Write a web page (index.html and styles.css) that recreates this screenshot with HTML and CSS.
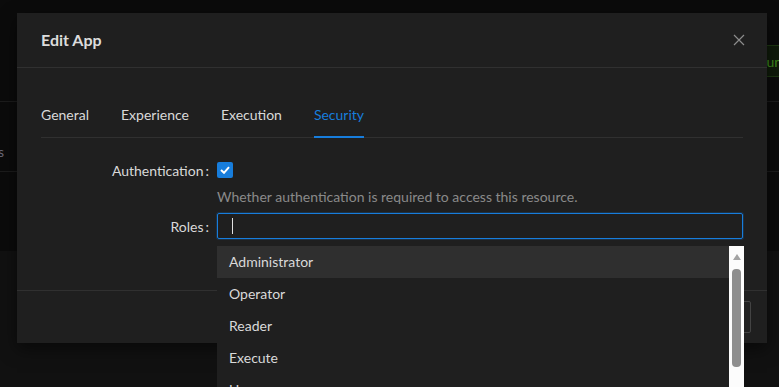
FILE: index.html
```html
<!DOCTYPE html>
<html>
	<head>
		<meta charset="utf-8">
		<link rel="stylesheet" href="styles.css">
	</head>
	<body>
		<div class="page">
			<div class="topbar"></div>
			<div class="toolbar">
				<button class="runButton">Run</button>
			</div>
			<div class="tableRow">
				<div class="cell"><span class="cellText">Apps</span></div>
			</div>
			<div class="panel"></div>
		</div>

		<div class="modal">
			<div class="modalHeader">
				<span class="modalTitle">Edit App</span>
				<svg class="closeIcon" width="12" height="12" viewBox="0 0 12 12">
					<path d="M1 1 L11 11 M11 1 L1 11" stroke="#8c8c8c" stroke-width="1.2" fill="none"/>
				</svg>
			</div>

			<div class="modalBody">
				<div class="tabs">
					<div class="tab">General</div>
					<div class="tab">Experience</div>
					<div class="tab">Execution</div>
					<div class="tab active">Security</div>
				</div>

				<div class="formRow checkRow">
					<label class="formLabel">Authentication</label>
					<div class="formControl">
						<span class="checkbox">
							<svg width="10" height="8" viewBox="0 0 10 8">
								<path d="M1 4 L4 6.8 L9 1.2" stroke="#fff" stroke-width="2" fill="none"/>
							</svg>
						</span>
					</div>
				</div>
				<div class="formHelp">Whether authentication is required to access this resource.</div>

				<div class="formRow inputRow">
					<label class="formLabel">Roles</label>
					<div class="formControl">
						<div class="selectBox"><span class="caret"></span></div>
					</div>
				</div>
			</div>

			<div class="modalFooter">
				<button class="footerButton">Cancel</button>
				<button class="footerButton">Save</button>
			</div>

			<div class="dropdown">
				<div class="optionList">
					<div class="option active">Administrator</div>
					<div class="option">Operator</div>
					<div class="option">Reader</div>
					<div class="option">Execute</div>
					<div class="option">User</div>
				</div>
				<div class="scrollbar">
					<div class="scrollArrow"></div>
					<div class="scrollThumb"></div>
				</div>
			</div>
		</div>
	</body>
</html>
```

FILE: styles.css
```css
html, body {
	height: 387px;
	overflow: hidden;
}

body {
	margin: 0;
	background-color: #0b0b0b;
	font-family: Lato, "Noto Sans", sans-serif;
	font-size: 14px;
	color: #dbdbdb;
	position: relative;
}

/* page behind the dialog */

.page {
	display: flex;
	flex-direction: column;
}
.topbar {
	height: 45px;
}
.toolbar {
	height: 56px;
	display: flex;
	justify-content: flex-end;
	align-items: flex-start;
}
.runButton {
	height: 32px;
	width: 40px;
	padding: 0 0 0 7px;
	margin-right: -11px;
	background-color: #0f1a0a;
	border: 1px solid #1e3812;
	border-radius: 2px;
	color: #3f8a1c;
	font-family: inherit;
	font-size: 14px;
	text-align: left;
}
.tableRow {
	height: 69px;
	border-top: 1px solid #1c1c1c;
	border-bottom: 1px solid #1c1c1c;
	display: flex;
	align-items: flex-end;
}
.cell {
	width: 4px;
	display: flex;
	justify-content: flex-end;
	white-space: nowrap;
	padding-bottom: 11px;
}
.cellText {
	color: #6a6878;
}
.panel {
	margin-top: 79px;
	height: 140px;
	background-color: #111111;
}

/* dialog */

.modal {
	position: absolute;
	left: 17px;
	top: 13px;
	width: 750px;
	background-color: #1f1f1f;
	box-shadow: 0 6px 16px rgba(0, 0, 0, 0.5);
}
.modalHeader {
	display: flex;
	justify-content: space-between;
	align-items: center;
	padding: 16px 22px 16px 24px;
	border-bottom: 1px solid #303030;
	line-height: 22px;
}
.modalTitle {
	font-size: 16px;
	font-weight: bold;
	color: #dcdcdc;
}

.modalBody {
	padding: 24px 24px 51px 24px;
}

.tabs {
	display: flex;
	gap: 32px;
	border-bottom: 1px solid #303030;
	margin-bottom: 20px;
}
.tab {
	position: relative;
	padding: 12px 0 11px 0;
	line-height: 22px;
	font-size: 14px;
	color: #d9d9d9;
}
.tab.active {
	color: #177ddc;
}
.tab.active::after {
	content: "";
	position: absolute;
	left: 0;
	right: 0;
	bottom: -1px;
	height: 2px;
	background-color: #177ddc;
}

.formRow {
	display: flex;
	align-items: center;
}
.checkRow {
	height: 24px;
}
.inputRow {
	height: 26px;
	margin-top: 5px;
}
.formLabel {
	width: 176px;
	display: flex;
	justify-content: flex-end;
	color: #d9d9d9;
}
.formLabel::after {
	content: ":";
	margin: 0 8px 0 2px;
}
.formControl {
	flex: 1;
}

.checkbox {
	display: flex;
	align-items: center;
	justify-content: center;
	width: 16px;
	height: 16px;
	border-radius: 2px;
	background-color: #177ddc;
}

.formHelp {
	margin: 4px 0 0 176px;
	line-height: 22px;
	color: #8a8a8a;
}

.selectBox {
	height: 24px;
	border: 1px solid #177ddc;
	border-radius: 2px;
	box-shadow: 0 0 0 1px rgba(23, 125, 220, 0.2);
	display: flex;
	align-items: center;
}
.caret {
	display: block;
	width: 1px;
	height: 16px;
	margin-left: 14px;
	background-color: #e0e0e0;
}

.modalFooter {
	display: flex;
	justify-content: flex-end;
	gap: 8px;
	padding: 10px 16px;
	border-top: 1px solid #303030;
}
.footerButton {
	height: 32px;
	padding: 4px 15px;
	background-color: transparent;
	border: 1px solid #434343;
	border-radius: 2px;
	color: #d9d9d9;
	font-family: inherit;
	font-size: 14px;
}

/* roles dropdown */

.dropdown {
	position: absolute;
	left: 200px;
	top: 233px;
	width: 527px;
	height: 160px;
	display: flex;
	background-color: #1f1f1f;
}
.optionList {
	flex: 1;
}
.option {
	height: 32px;
	line-height: 32px;
	padding: 0 12px;
	color: #d9d9d9;
}
.option.active {
	background-color: #2f2f2f;
}

.scrollbar {
	width: 15px;
	background-color: #fcfcfc;
	display: flex;
	flex-direction: column;
	align-items: center;
}
.scrollArrow {
	margin-top: 8px;
	width: 0;
	height: 0;
	border-left: 4.5px solid transparent;
	border-right: 4.5px solid transparent;
	border-bottom: 6px solid #a3a3a3;
}
.scrollThumb {
	margin-top: 9px;
	width: 9px;
	height: 98px;
	border-radius: 4px;
	background-color: #8f8f8f;
}
```
